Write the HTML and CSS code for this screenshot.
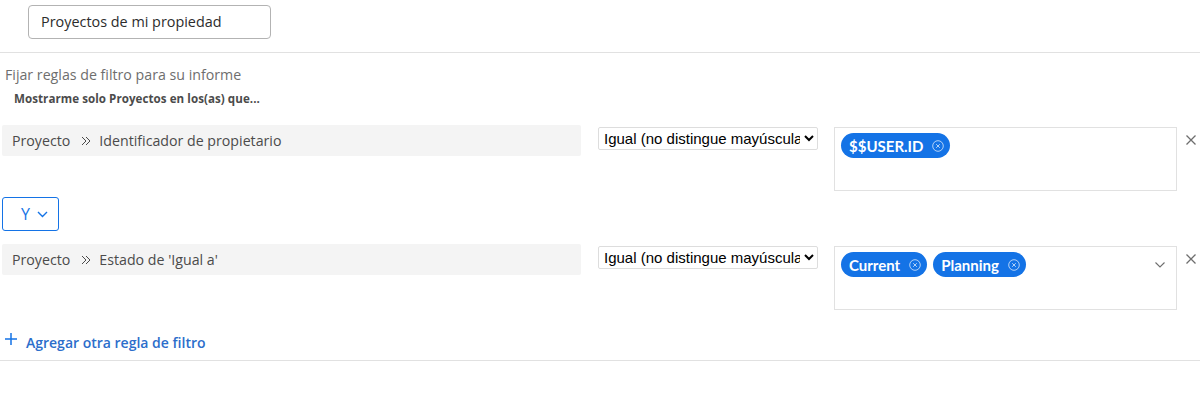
FILE: index.html
```html
<!DOCTYPE html>
<html lang="es">
<head>
<meta charset="utf-8">
<title>Filtro</title>
<link rel="stylesheet" href="styles.css">
</head>
<body>
<div class="header">
  <div class="name-input">Proyectos de mi propiedad</div>
</div>
<div class="intro">
  <div class="intro-title">Fijar reglas de filtro para su informe</div>
  <div class="intro-sub">Mostrarme solo Proyectos en los(as) que...</div>
</div>

<div class="rule">
  <div class="field"><span>Proyecto</span><svg class="sep" viewBox="0 0 10 10"><path d="M1 1 L5 5 L1 9 M5 1 L9 5 L5 9" fill="none" stroke="#4b4b4b" stroke-width="1"/></svg><span>Identificador de propietario</span></div>
  <select class="op"><option>Igual (no distingue mayúsculas/minúsculas)</option></select>
  <div class="values">
    <span class="chip">$$USER.ID<svg class="chip-x" viewBox="0 0 12 12"><circle cx="6" cy="6" r="5.3" fill="none" stroke="currentColor" stroke-width="0.9"/><path d="M4.2 4.2 L7.8 7.8 M7.8 4.2 L4.2 7.8" stroke="currentColor" stroke-width="0.9"/></svg></span>
  </div>
  <svg class="close" viewBox="0 0 10 10"><path d="M0.5 0.5 L9.5 9.5 M9.5 0.5 L0.5 9.5" stroke="#6e6e6e" stroke-width="1.3"/></svg>
</div>

<div class="conj">Y<svg class="conj-chev" viewBox="0 0 11 7"><path d="M1 1 L5.5 5.5 L10 1" fill="none" stroke="currentColor" stroke-width="1.4"/></svg></div>

<div class="rule">
  <div class="field"><span>Proyecto</span><svg class="sep" viewBox="0 0 10 10"><path d="M1 1 L5 5 L1 9 M5 1 L9 5 L5 9" fill="none" stroke="#4b4b4b" stroke-width="1"/></svg><span>Estado de 'Igual a'</span></div>
  <select class="op"><option>Igual (no distingue mayúsculas/minúsculas)</option></select>
  <div class="values">
    <span class="chip">Current<svg class="chip-x" viewBox="0 0 12 12"><circle cx="6" cy="6" r="5.3" fill="none" stroke="currentColor" stroke-width="0.9"/><path d="M4.2 4.2 L7.8 7.8 M7.8 4.2 L4.2 7.8" stroke="currentColor" stroke-width="0.9"/></svg></span>
    <span class="chip">Planning<svg class="chip-x" viewBox="0 0 12 12"><circle cx="6" cy="6" r="5.3" fill="none" stroke="currentColor" stroke-width="0.9"/><path d="M4.2 4.2 L7.8 7.8 M7.8 4.2 L4.2 7.8" stroke="currentColor" stroke-width="0.9"/></svg></span>
    <svg class="values-chev" viewBox="0 0 10 6"><path d="M0.5 0.5 L5 5 L9.5 0.5" fill="none" stroke="#6e6e6e" stroke-width="1.1"/></svg>
  </div>
  <svg class="close" viewBox="0 0 10 10"><path d="M0.5 0.5 L9.5 9.5 M9.5 0.5 L0.5 9.5" stroke="#6e6e6e" stroke-width="1.3"/></svg>
</div>

<div class="add">
  <svg class="plus" viewBox="0 0 12 12"><path d="M6 0 V12 M0 6 H12" stroke="#1473e6" stroke-width="1.5"/></svg>
  <span class="add-text">Agregar otra regla de filtro</span>
</div>
</body>
</html>
```

FILE: styles.css
```css
* { box-sizing: border-box; }
html, body { margin: 0; padding: 0; background: #fff; }
body {
  font-family: "Open Sans", Lato, Arial, sans-serif;
  color: #2c2c2c;
  width: 1200px;
}
.header {
  height: 53px;
  padding: 5px 0 0 28px;
  border-bottom: 1px solid #e1e1e1;
}
.name-input {
  width: 243px;
  height: 34px;
  border: 1px solid #b3b3b3;
  border-radius: 4px;
  padding-left: 12px;
  font-size: 14.4px;
  line-height: 32px;
  color: #2c2c2c;
}
.intro { padding: 12px 0 0 5px; }
.intro-title {
  font-size: 14.2px;
  line-height: 20px;
  color: #6e6e6e;
}
.intro-sub {
  margin: 5px 0 0 9px;
  font-size: 11.6px;
  font-weight: 700;
  letter-spacing: 0.05px;
  line-height: 17px;
  color: #4b4b4b;
}
.rule {
  display: flex;
  align-items: flex-start;
  padding-left: 2px;
}
.intro + .rule { margin-top: 18px; }
.field {
  width: 579px;
  height: 31px;
  background: #f4f4f4;
  border-radius: 2px;
  padding-left: 10px;
  font-size: 14.2px;
  line-height: 31px;
  color: #4b4b4b;
  display: flex;
  align-items: center;
}
.sep {
  width: 10px;
  height: 10px;
  margin: 0 8px 0 11px;
}
.op {
  margin: 2px 0 0 17px;
  width: 220px;
  height: 23px;
  border: 1px solid #dddddd;
  border-radius: 2px;
  background: #fff;
  padding: 0 1px;
  font-family: "Liberation Sans", Arial, sans-serif;
  font-size: 15px;
  color: #000;
}
.values {
  margin: 2px 0 0 16px;
  width: 343px;
  height: 64px;
  border: 1px solid #e1e1e1;
  padding: 5px 6px;
  display: flex;
  align-items: flex-start;
  gap: 6px;
}
.chip {
  display: inline-flex;
  align-items: center;
  height: 25px;
  border-radius: 13px;
  background: #1473e6;
  color: #fff;
  font-family: Lato, "Open Sans", sans-serif;
  font-size: 15px;
  font-weight: 700;
  padding: 0 6px 0 8px;
}
.chip-x {
  width: 12px;
  height: 12px;
  margin-left: 9px;
  color: rgba(255,255,255,0.75);
}
.values-chev {
  width: 10px;
  height: 6px;
  margin: 10px 5px 0 auto;
}
.close {
  width: 10px;
  height: 10px;
  margin: 10px 0 0 9px;
}
.conj {
  margin: 6px 0 13px 2px;
  width: 57px;
  height: 34px;
  border: 1px solid #1473e6;
  border-radius: 3px;
  color: #1473e6;
  font-size: 16px;
  font-weight: 400;
  display: flex;
  align-items: center;
  padding-left: 18px;
  gap: 7px;
}
.conj-chev { width: 11px; height: 7px; }
.add {
  margin-top: 22px;
  padding: 0 0 8px 5px;
  border-bottom: 1px solid #e1e1e1;
  display: flex;
  align-items: center;
  height: 29px;
}
.plus { width: 12px; height: 12px; margin-top: -6px; }
.add-text {
  margin-left: 9px;
  font-size: 14px;
  font-weight: 600;
  color: #2c6ecb;
}
```
